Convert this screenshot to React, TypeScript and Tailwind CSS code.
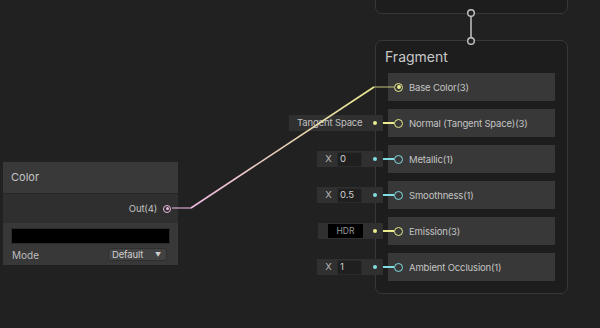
import React from "react";

const YEL = "#e9eb8e";
const CYAN = "#80dde1";
const PINK = "#ecb8e2";

type PortRowProps = {
  label: string;
  color: string;
  connected?: boolean;
  input?: React.ReactNode;
};

function Dot({ color }: { color: string }) {
  return <span className="block w-[4px] h-[4px] rounded-full shrink-0" style={{ background: color }} />;
}

function PortRow({ label, color, connected, input }: PortRowProps) {
  return (
    <div className="relative h-[28px] bg-[#383838] flex items-center">
      {input}
      {input && (
        <span className="absolute left-[-5px] top-[13px] w-[11px] h-[2px]" style={{ background: color }} />
      )}
      <span
        className="ml-[6px] w-[9px] h-[9px] rounded-full border-[1.5px] flex items-center justify-center shrink-0 bg-[#383838]"
        style={{ borderColor: color }}
      >
        {connected && <span className="block w-[4px] h-[4px] rounded-full" style={{ background: color }} />}
      </span>
      <span className="ml-[6px] mt-[2px] text-[9.5px] tracking-[-0.15px] text-[#c4c4c4] leading-none">{label}</span>
    </div>
  );
}

function InputBox({ children, width, color }: { children: React.ReactNode; width: number; color: string }) {
  return (
    <div
      className="absolute right-[calc(100%+5px)] top-[6px] h-[16px] bg-[#303030] flex items-center pr-[6px]"
      style={{ width }}
    >
      {children}
      <span className="ml-auto">
        <Dot color={color} />
      </span>
    </div>
  );
}

function FloatInput({ value }: { value: string }) {
  return (
    <InputBox width={66} color={CYAN}>
      <span className="ml-[8px] w-[7px] text-[9.5px] text-[#b8b8b8] leading-none text-center">X</span>
      <span className="ml-[5px] w-[25px] h-[15px] rounded-[2px] bg-[#1f1f1f] border border-[#2a2a2a] flex items-center pl-[2px] text-[9.5px] text-[#d0d0d0] leading-none">
        {value}
      </span>
    </InputBox>
  );
}

export default function App() {
  return (
    <div
      className="relative w-[600px] h-[328px] overflow-hidden bg-[#212121]"
      style={{ fontFamily: "Inter, 'Noto Sans', sans-serif" }}
    >
      {/* Vertex node (partially visible) */}
      <div className="absolute left-[375px] top-[-30px] w-[193px] h-[44px] rounded-[7px] border border-[#383838] bg-[#1d1d1d]" />

      {/* Fragment node */}
      <div className="absolute left-[375px] top-[40px] w-[193px] h-[254px] rounded-[7px] border border-[#383838] bg-[#1d1d1d] flex flex-col">
        <div className="h-[32px] pl-[9px] pb-[1px] flex items-center text-[14px] text-[#c8c8c8]">Fragment</div>
        <div className="flex flex-col gap-2 px-3">
          <PortRow label="Base Color(3)" color={YEL} connected />
          <PortRow
            label="Normal (Tangent Space)(3)"
            color={YEL}
            input={
              <InputBox width={94} color={YEL}>
                <span className="ml-[8px] text-[9.5px] tracking-[-0.15px] text-[#c0c0c0] leading-none whitespace-nowrap">
                  Tangent Space
                </span>
              </InputBox>
            }
          />
          <PortRow label="Metallic(1)" color={CYAN} input={<FloatInput value="0" />} />
          <PortRow label="Smoothness(1)" color={CYAN} input={<FloatInput value="0.5" />} />
          <PortRow
            label="Emission(3)"
            color={YEL}
            input={
              <InputBox width={65} color={YEL}>
                <span className="ml-[10px] w-[35px] h-[14px] bg-black flex items-center justify-center text-[8.5px] text-[#9a9a9a] leading-none">
                  HDR
                </span>
              </InputBox>
            }
          />
          <PortRow label="Ambient Occlusion(1)" color={CYAN} input={<FloatInput value="1" />} />
        </div>
      </div>

      {/* Color node */}
      <div className="absolute left-[3px] top-[162px] w-[175px] flex flex-col">
        <div className="h-[31px] bg-[#393939] flex items-center pl-[8px] text-[11px] text-[#c4c4c4]">Color</div>
        <div className="h-[30px] bg-[#2f2f2f] border-t border-[#262626] flex items-center justify-end pr-[7px]">
          <span className="text-[9.5px] tracking-[-0.15px] text-[#c4c4c4] leading-none">Out(4)</span>
          <span
            className="ml-[6px] w-[8px] h-[8px] rounded-full border-[1.5px] flex items-center justify-center"
            style={{ borderColor: PINK }}
          >
            <span className="block w-[3px] h-[3px] rounded-full" style={{ background: PINK }} />
          </span>
        </div>
        <div className="h-[42px] bg-[#383838] flex flex-col px-[8px] pt-[5px]">
          <div className="h-[16px] bg-black border border-[#2c2c2c]" />
          <div className="mt-[4px] flex items-center justify-between pl-[1px] pr-[3px]">
            <span className="text-[10px] text-[#bdbdbd] leading-none">Mode</span>
            <span className="w-[59px] h-[13px] rounded-[3px] bg-[#424242] border border-[#2e2e2e] flex items-center pl-[3px] pr-[5px] text-[9.5px] tracking-[-0.15px] text-[#cfcfcf] leading-none">
              Default
              <span className="ml-auto text-[6px] text-[#cfcfcf]">▼</span>
            </span>
          </div>
        </div>
      </div>

      {/* Wires */}
      <svg className="absolute inset-0 pointer-events-none" width="600" height="328">
        <defs>
          <linearGradient id="edge" gradientUnits="userSpaceOnUse" x1="191" y1="208" x2="374" y2="87">
            <stop offset="0" stopColor={PINK} />
            <stop offset="1" stopColor={YEL} />
          </linearGradient>
        </defs>
        <line x1="172" y1="208" x2="191" y2="208" stroke={PINK} strokeWidth="1.5" opacity="0.7" />
        <line x1="191" y1="208" x2="374" y2="87" stroke="url(#edge)" strokeWidth="1.6" />
        <line x1="374" y1="87" x2="394" y2="87" stroke={YEL} strokeWidth="1.5" opacity="0.55" />
        <line x1="471" y1="16" x2="471" y2="38" stroke="#c4c4c4" strokeWidth="1.5" />
        <circle cx="471" cy="13" r="3.3" fill="#212121" stroke="#c4c4c4" strokeWidth="1.4" />
        <circle cx="471" cy="41" r="3.3" fill="#212121" stroke="#c4c4c4" strokeWidth="1.4" />
      </svg>
    </div>
  );
}
